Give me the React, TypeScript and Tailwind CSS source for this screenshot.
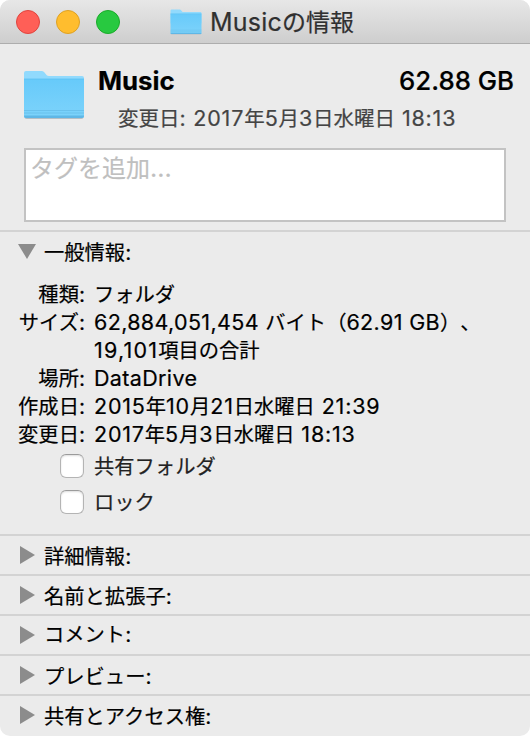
import { useState } from 'react'
import clsx from 'clsx'

const details = [
    { label: '種類:', value: 'フォルダ' },
    { label: 'サイズ:', value: '62,884,051,454 バイト（62.91 GB）、' },
    { label: '', value: '19,101項目の合計', latin: 'text-[21.5px] tracking-[1.2px]' },
    { label: '場所:', value: 'DataDrive' },
    { label: '作成日:', value: '2015年10月21日水曜日 21:39', latin: 'text-[21.5px] tracking-[0.8px]' },
    { label: '変更日:', value: '2017年5月3日水曜日 18:13', latin: 'text-[21.5px] tracking-[0.8px]' },
]

const sections = [
    { title: '詳細情報:', offset: 'pt-[5px]' },
    { title: '名前と拡張子:', offset: 'pt-[5px]' },
    { title: 'コメント:', offset: 'pt-px' },
    { title: 'プレビュー:', offset: 'pt-[5px]' },
    { title: '共有とアクセス権:', offset: 'pt-[5px]' },
]

// Latin runs are set slightly larger than the kana and kanji around them
function Mixed({ text, latin = 'text-[21px]' }: { text: string; latin?: string }) {
    const parts = text.split(/([\x20-\x7e]+)/).filter(Boolean)
    return (
        <>
            {parts.map((part, i) =>
                /^[\x20-\x7e]/.test(part) ? (
                    <span key={i} className={clsx('leading-none whitespace-pre', latin)}>{part}</span>
                ) : (
                    <span key={i}>{part}</span>
                )
            )}
        </>
    )
}

function Folder({ className }: { className: string }) {
    return (
        <svg viewBox="0 0 62 50" preserveAspectRatio="none" className={className}>
            <defs>
                <linearGradient id="folder" x1="0" y1="0" x2="0" y2="1">
                    <stop offset="0" stopColor="#67cafa" />
                    <stop offset="1" stopColor="#7dd3fb" />
                </linearGradient>
            </defs>
            <path d="M1.500 46v1q0 2 2 2h55q2 0 2-2v-1z" fill="#b5bfc5" />
            <path d="M1 3q0-2 2-2h16q1.500 0 2.500 1.500l2 2.500q.8 1 2.500 1h33q2 0 2 2v20H1z" fill="#91dafd" />
            <path d="M1 9h60v37q0 2-2 2H3q-2 0-2-2z" fill="url(#folder)" />
            <path d="M1 9h60" stroke="#5ec1f1" strokeWidth=".8" />
            <path d="M1 40.500h60M1 43h60" stroke="#66bde9" strokeWidth=".8" />
            <path d="M1 45.500h60v.5q0 2-2 2H3q-2 0-2-2z" fill="#5fb7e6" />
        </svg>
    )
}

function Checkbox({ label }: { label: string }) {
    const [checked, setChecked] = useState(false)
    return (
        <label className="flex h-9 items-center pl-[60px] text-[20.3px] text-[#222]">
            <input
                type="checkbox"
                checked={checked}
                onChange={() => setChecked(!checked)}
                className="size-6 appearance-none rounded-[6px] border border-[#b4b4b4] border-t-[#9b9b9b] bg-white shadow-[inset_0_1px_2px_#ddd] checked:bg-blue-500"
            />
            <span className="ml-[10px] pt-0.5">{label}</span>
        </label>
    )
}

export default function App() {
    return (
        <div className="bg-white">
            <div className="flex h-[736px] w-[530px] flex-col overflow-hidden rounded-[10px] bg-[#ebebeb] font-['Inter','Noto_Sans_CJK_JP',sans-serif] whitespace-nowrap text-black [-webkit-text-stroke-width:0.2px] [text-spacing-trim:space-all]">
                {/* Title bar */}
                <header className="flex h-11 shrink-0 items-center border-b border-[#adadad] bg-linear-to-b from-[#e7e7e7] to-[#cecece] pl-4">
                    <div className="flex gap-4">
                        <span className="size-6 rounded-full border border-[#e0443e] bg-[#ff5f57]" />
                        <span className="size-6 rounded-full border border-[#dea123] bg-[#ffbd2e]" />
                        <span className="size-6 rounded-full border border-[#1aab29] bg-[#28c940]" />
                    </div>
                    <Folder className="ml-[50px] h-[26px] w-8" />
                    <h1 className="ml-2 pt-0.5 text-[24px] leading-[42px] text-[#303030]">
                        <Mixed text="Musicの情報" latin="text-[25px] tracking-[0.2px]" />
                    </h1>
                </header>

                {/* Summary */}
                <div className="flex h-[104px] shrink-0 pt-[26px] pr-4 pl-[23px]">
                    <Folder className="h-[50px] w-[62px] shrink-0" />
                    <div className="ml-[13px] flex-1">
                        <div className="flex h-[22px] items-center justify-between text-[25.8px]">
                            <span className="font-bold">Music</span>
                            <span className="font-medium">62.88 GB</span>
                        </div>
                        <div className="mt-[5px] pl-5 text-[20.5px] leading-[44px] text-[#444]">
                            <Mixed text="変更日: 2017年5月3日水曜日 18:13" latin="text-[21.5px] tracking-[0.8px]" />
                        </div>
                    </div>
                </div>
                <div className="mx-6 h-[74px] shrink-0 border-2 border-[#c3c3c3] bg-white pl-1 text-[24px] leading-[37px] text-[#bfbfbf]">
                    <Mixed text="タグを追加..." latin="text-[25px]" />
                </div>

                {/* General */}
                <section className="mt-2 h-[304px] shrink-0 border-t-2 border-[#d3d3d3]">
                    <div className="flex h-[38px] items-center pl-[18px] text-[20.3px]">
                        <svg viewBox="0 0 18 15" className="h-[15px] w-[18px] fill-[#8c8c8c]">
                            <path d="M0 0h18L9 15z" />
                        </svg>
                        <span className="ml-2 pt-1"><Mixed text="一般情報:" /></span>
                    </div>
                    <dl className="mt-[11px] text-[20.3px]">
                        {details.map((row) => (
                            <div key={row.value} className="flex h-7 leading-7">
                                <dt className="w-[85px] text-right"><Mixed text={row.label} /></dt>
                                <dd className="ml-[9px]">
                                    <Mixed text={row.value} latin={row.latin ?? 'text-[21.5px] tracking-[0.35px]'} />
                                </dd>
                            </div>
                        ))}
                    </dl>
                    <div className="-mt-px">
                        <Checkbox label="共有フォルダ" />
                        <Checkbox label="ロック" />
                    </div>
                </section>

                {sections.map(({ title, offset }) => (
                    <section key={title} className="flex h-10 shrink-0 items-center border-t-2 border-[#d3d3d3] pl-5 text-[20.3px]">
                        <svg viewBox="0 0 15 18" className="h-[18px] w-[15px] fill-[#8c8c8c]">
                            <path d="M0 0v18l15-9z" />
                        </svg>
                        <span className={clsx('ml-[9px]', offset)}><Mixed text={title} /></span>
                    </section>
                ))}
            </div>
        </div>
    )
}
